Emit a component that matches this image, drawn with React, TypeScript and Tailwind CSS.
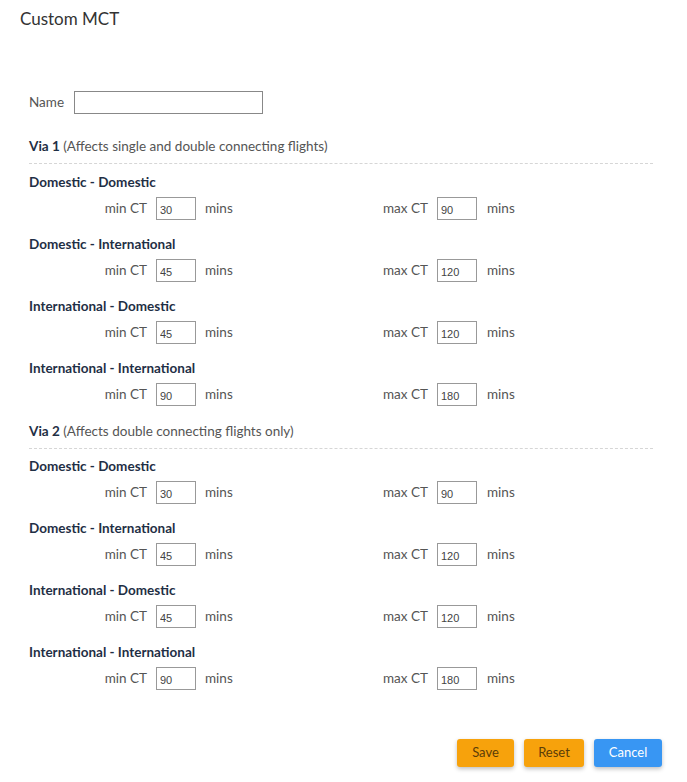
import React from 'react';

type Pair = { title: string; min: string; max: string };

const via1: Pair[] = [
  { title: 'Domestic - Domestic', min: '30', max: '90' },
  { title: 'Domestic - International', min: '45', max: '120' },
  { title: 'International - Domestic', min: '45', max: '120' },
  { title: 'International - International', min: '90', max: '180' },
];

function CtRow({ min, max }: { min: string; max: string }) {
  return (
    <div className="flex items-center h-[23px] text-[13.5px] text-[#555]">
      <div className="w-[118px] text-right">min CT</div>
      <input
        defaultValue={min}
        className="ml-[9px] w-[40px] h-[23px] border border-[#999] px-[3px] pt-[2px] text-[11px] text-[#444] font-['Liberation_Sans',sans-serif] outline-none"
      />
      <div className="ml-[9px] w-[136px]">mins</div>
      <div className="w-[87px] text-right">max CT</div>
      <input
        defaultValue={max}
        className="ml-[9px] w-[40px] h-[23px] border border-[#999] px-[3px] pt-[2px] text-[11px] text-[#444] font-['Liberation_Sans',sans-serif] outline-none"
      />
      <div className="ml-[10px]">mins</div>
    </div>
  );
}

function Group({ item }: { item: Pair }) {
  return (
    <div className="mb-[14px]">
      <div className="h-[20px] leading-[20px] text-[13.5px] font-bold text-[#1f2f45] mb-[5px]">{item.title}</div>
      <CtRow min={item.min} max={item.max} />
    </div>
  );
}

function Via({ label, note, items, gap }: { label: string; note: string; items: Pair[]; gap: string }) {
  return (
    <div>
      <div className="h-[20px] leading-[20px] text-[13.5px] text-[#555]">
        <span className="font-bold text-[#1f2f45]">{label}</span> {note}
      </div>
      <div className={`mt-[7px] border-t border-dashed border-[#d6d6d6] w-[624px] ${gap}`} />
      {items.map((it) => (
        <Group key={it.title} item={it} />
      ))}
    </div>
  );
}

export default function App() {
  return (
    <div className="w-[687px] h-[782px] bg-white font-['Lato',sans-serif] relative">
      <div className="pl-[20px] pt-[7px] h-[24px] leading-[24px] text-[17px] text-[#333]">Custom MCT</div>

      <div className="pl-[29px] pt-[67px]">
        {/* Name */}
        <div className="flex items-center h-[23px]">
          <span className="text-[13.5px] text-[#555] w-[45px]">Name</span>
          <input className="w-[189px] h-[23px] border border-[#888] outline-none" />
        </div>

        <div className="mt-[22px]">
          <Via label="Via 1" note="(Affects single and double connecting flights)" items={via1} gap="mb-[8px]" />
          <div className="h-[1px]" />
          <Via label="Via 2" note="(Affects double connecting flights only)" items={via1} gap="mb-[7px]" />
        </div>

        {/* Buttons */}
        <div className="flex justify-end gap-[10px] w-[633px] mt-[49px]">
          <button className="w-[57px] h-[28px] rounded-[3px] bg-[#f7a20c] text-[#5b3d08] text-[13px] shadow-[0_2px_4px_rgba(0,0,0,0.25)]">
            Save
          </button>
          <button className="w-[60px] h-[28px] rounded-[3px] bg-[#f7a20c] text-[#5b3d08] text-[13px] shadow-[0_2px_4px_rgba(0,0,0,0.25)]">
            Reset
          </button>
          <button className="w-[68px] h-[28px] rounded-[3px] bg-[#3896f3] text-white text-[13px] shadow-[0_2px_4px_rgba(0,0,0,0.25)]">
            Cancel
          </button>
        </div>
      </div>
    </div>
  );
}
